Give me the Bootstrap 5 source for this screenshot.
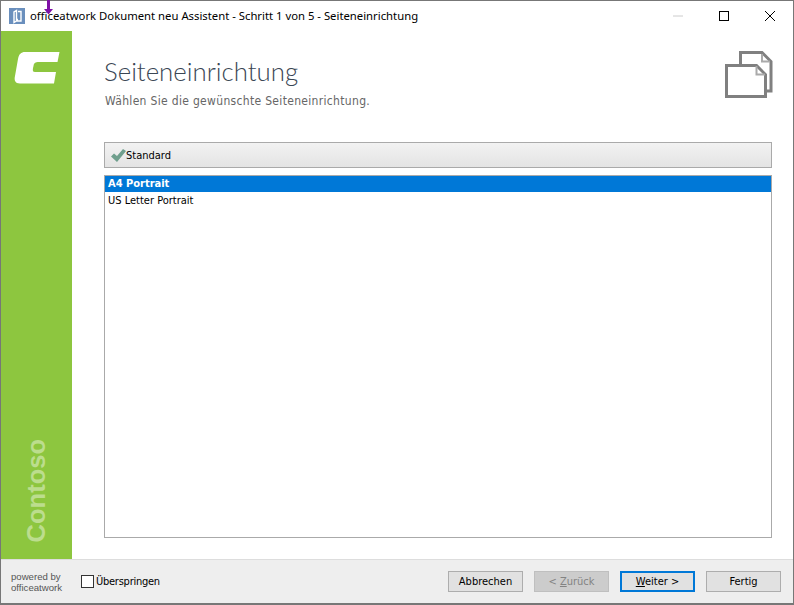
<!DOCTYPE html>
<html lang="de">
<head>
<meta charset="utf-8">
<title>officeatwork</title>
<link href="https://cdn.jsdelivr.net/npm/bootstrap@5.3.0/dist/css/bootstrap.min.css" rel="stylesheet">
<style>
html,body{height:100%;margin:0;background:#fff;overflow:hidden}
body{font-family:"DejaVu Sans Condensed","DejaVu Sans","Liberation Sans",sans-serif;font-stretch:condensed;font-size:11px;color:#000;line-height:1.2}
.wiz-win{width:794px;height:605px;border:1px solid #777;border-bottom-width:2px;position:relative;background:#fff}
.wiz-title{height:30px;padding-left:8px;font-family:"Noto Sans",sans-serif;font-stretch:normal;font-size:11.3px}
.wiz-title .ttl{margin-left:5px}
.wiz-arrow{position:absolute;left:43px;top:-1px}
.wiz-ctrl{width:46px;height:30px}
.wiz-main{height:528px}
.wiz-side{width:71px;background:#8dc63f}
.wiz-logo{margin-top:21px;margin-left:1px}
.wiz-side .brand{writing-mode:vertical-rl;transform:rotate(180deg);font-family:"Liberation Sans",sans-serif;font-stretch:normal;font-weight:700;font-size:25.500px;line-height:1;color:#bcdd8e;margin-bottom:17px}
.wiz-body{padding:0 21px 0 32px}
.wiz-head{height:111px}
.wiz-h{font-family:"Lato",sans-serif;font-stretch:normal;font-weight:300;font-size:25.800px;line-height:36px;padding-top:22px;color:#3a4654;margin:0}
.wiz-sub{color:#666;font-size:12px;margin:5px 0 0 1px;letter-spacing:.32px}
.wiz-doc{margin:20px -1px 0 0}
.wiz-std{height:26px;border:1px solid #aaa;background:linear-gradient(#f2f2f2,#e4e4e4);padding-left:6px;margin-bottom:7px}
.wiz-std span{padding-top:1px}
.wiz-list{height:363px;border:1px solid #aaa}
.wiz-opt{height:16px;line-height:15px;padding-left:3px}
.wiz-opt.sel{background:#0078d7;color:#fff;font-weight:700}
.wiz-opt.next{height:17px;line-height:17px}
.wiz-foot{height:44px;background:#eee;border-top:1px solid #ddd;padding:0 12px 0 10px}
.wiz-pow{font-family:"Liberation Sans",sans-serif;font-stretch:normal;font-size:9.600px;line-height:11px;color:#555;width:70px}
.wiz-chk{width:13px;height:13px;border:1px solid #333;background:#fff;margin-right:2px;display:block}
.wiz-skip{letter-spacing:-.25px}
.wiz-btns{gap:11px}
.wiz-btn{width:75px;height:21px;padding:0;border:1px solid #adadad;border-radius:0;background:#e1e1e1;color:#000;font-size:11px;line-height:19px;font-stretch:condensed}
.wiz-btn:disabled{background:#ccc;color:#838383;border-color:#bfbfbf;opacity:1}
.wiz-btn.act{border:2px solid #0078d7;line-height:17px}
.wiz-btn:hover{background:#e1e1e1}
</style>
</head>
<body>
<div class="wiz-win d-flex flex-column">
  <svg class="wiz-arrow" width="9" height="15" viewBox="0 0 9 15"><path d="M3 0h3v9h3L4.500 14.500 0 9h3z" fill="#7f0fa6"/></svg>
  <div class="wiz-title d-flex align-items-center">
    <svg width="16" height="16" viewBox="0 0 16 16"><rect width="16" height="16" fill="#6a8fbd"/><path d="M9 3.500H12V13H7.500L5 14.500V4L7.500 2.500V11.500H9" fill="none" stroke="#fff" stroke-width="1.400"/></svg>
    <span class="ttl flex-grow-1">officeatwork Dokument neu Assistent - Schritt 1 von 5 - Seiteneinrichtung</span>
    <div class="wiz-ctrl d-flex align-items-center justify-content-center"><svg width="10" height="10"><path d="M0 5h10" stroke="#ccc"/></svg></div>
    <div class="wiz-ctrl d-flex align-items-center justify-content-center"><svg width="10" height="10"><rect x=".5" y=".5" width="9" height="9" fill="none" stroke="#000"/></svg></div>
    <div class="wiz-ctrl d-flex align-items-center justify-content-center"><svg width="10" height="10"><path d="M0 0l10 10M10 0L0 10" stroke="#000"/></svg></div>
  </div>
  <div class="wiz-main d-flex">
    <div class="wiz-side d-flex flex-column align-items-center justify-content-between flex-shrink-0">
      <svg class="wiz-logo" width="46" height="33" viewBox="0 0 46 33"><path d="M11 0H45.500L43.500 10H25C21 10 20 11 19.500 14L19 16C18.500 19 19 20 21 20H42L40 31.500H6C1 31.500 0 28 1 24L4 7C5 2 7 0 11 0z" fill="#fff"/></svg>
      <div class="brand">Contoso</div>
    </div>
    <div class="wiz-body flex-grow-1 d-flex flex-column">
      <div class="wiz-head d-flex justify-content-between">
        <div>
          <h1 class="wiz-h">Seiteneinrichtung</h1>
          <p class="wiz-sub">Wählen Sie die gewünschte Seiteneinrichtung.</p>
        </div>
        <svg class="wiz-doc" width="48" height="48" viewBox="0 0 48 48" fill="none" stroke="#808080" stroke-width="3"><path d="M15.500 13V1.500H37L46 10.500V40H42"/><path d="M1.500 14.500H31.500L40.500 23.500V45.500H1.500z"/><path d="M37 3V10.500H45M31.500 15V23.500H40" stroke="#aaa" stroke-width="2"/></svg>
      </div>
      <div class="wiz-std d-flex align-items-center">
        <svg width="15" height="13" viewBox="0 0 15 13"><path d="M0 7.500L3 4.500 6 7 12 0 15 2 6 13z" fill="#6f9f8d"/></svg>
        <span>Standard</span>
      </div>
      <div class="wiz-list">
        <div class="wiz-opt sel">A4 Portrait</div>
        <div class="wiz-opt next">US Letter Portrait</div>
      </div>
    </div>
  </div>
  <div class="wiz-foot d-flex align-items-center">
    <div class="wiz-pow">powered by<br>officeatwork</div>
    <span class="wiz-chk"></span><span class="wiz-skip flex-grow-1">Überspringen</span>
    <div class="d-flex wiz-btns">
      <button class="btn wiz-btn">Abbrechen</button>
      <button class="btn wiz-btn" disabled>&lt; <u>Z</u>urück</button>
      <button class="btn wiz-btn act"><u>W</u>eiter &gt;</button>
      <button class="btn wiz-btn">Fertig</button>
    </div>
  </div>
</div>
<script src="https://cdn.jsdelivr.net/npm/bootstrap@5.3.0/dist/js/bootstrap.bundle.min.js"></script>
</body>
</html>
